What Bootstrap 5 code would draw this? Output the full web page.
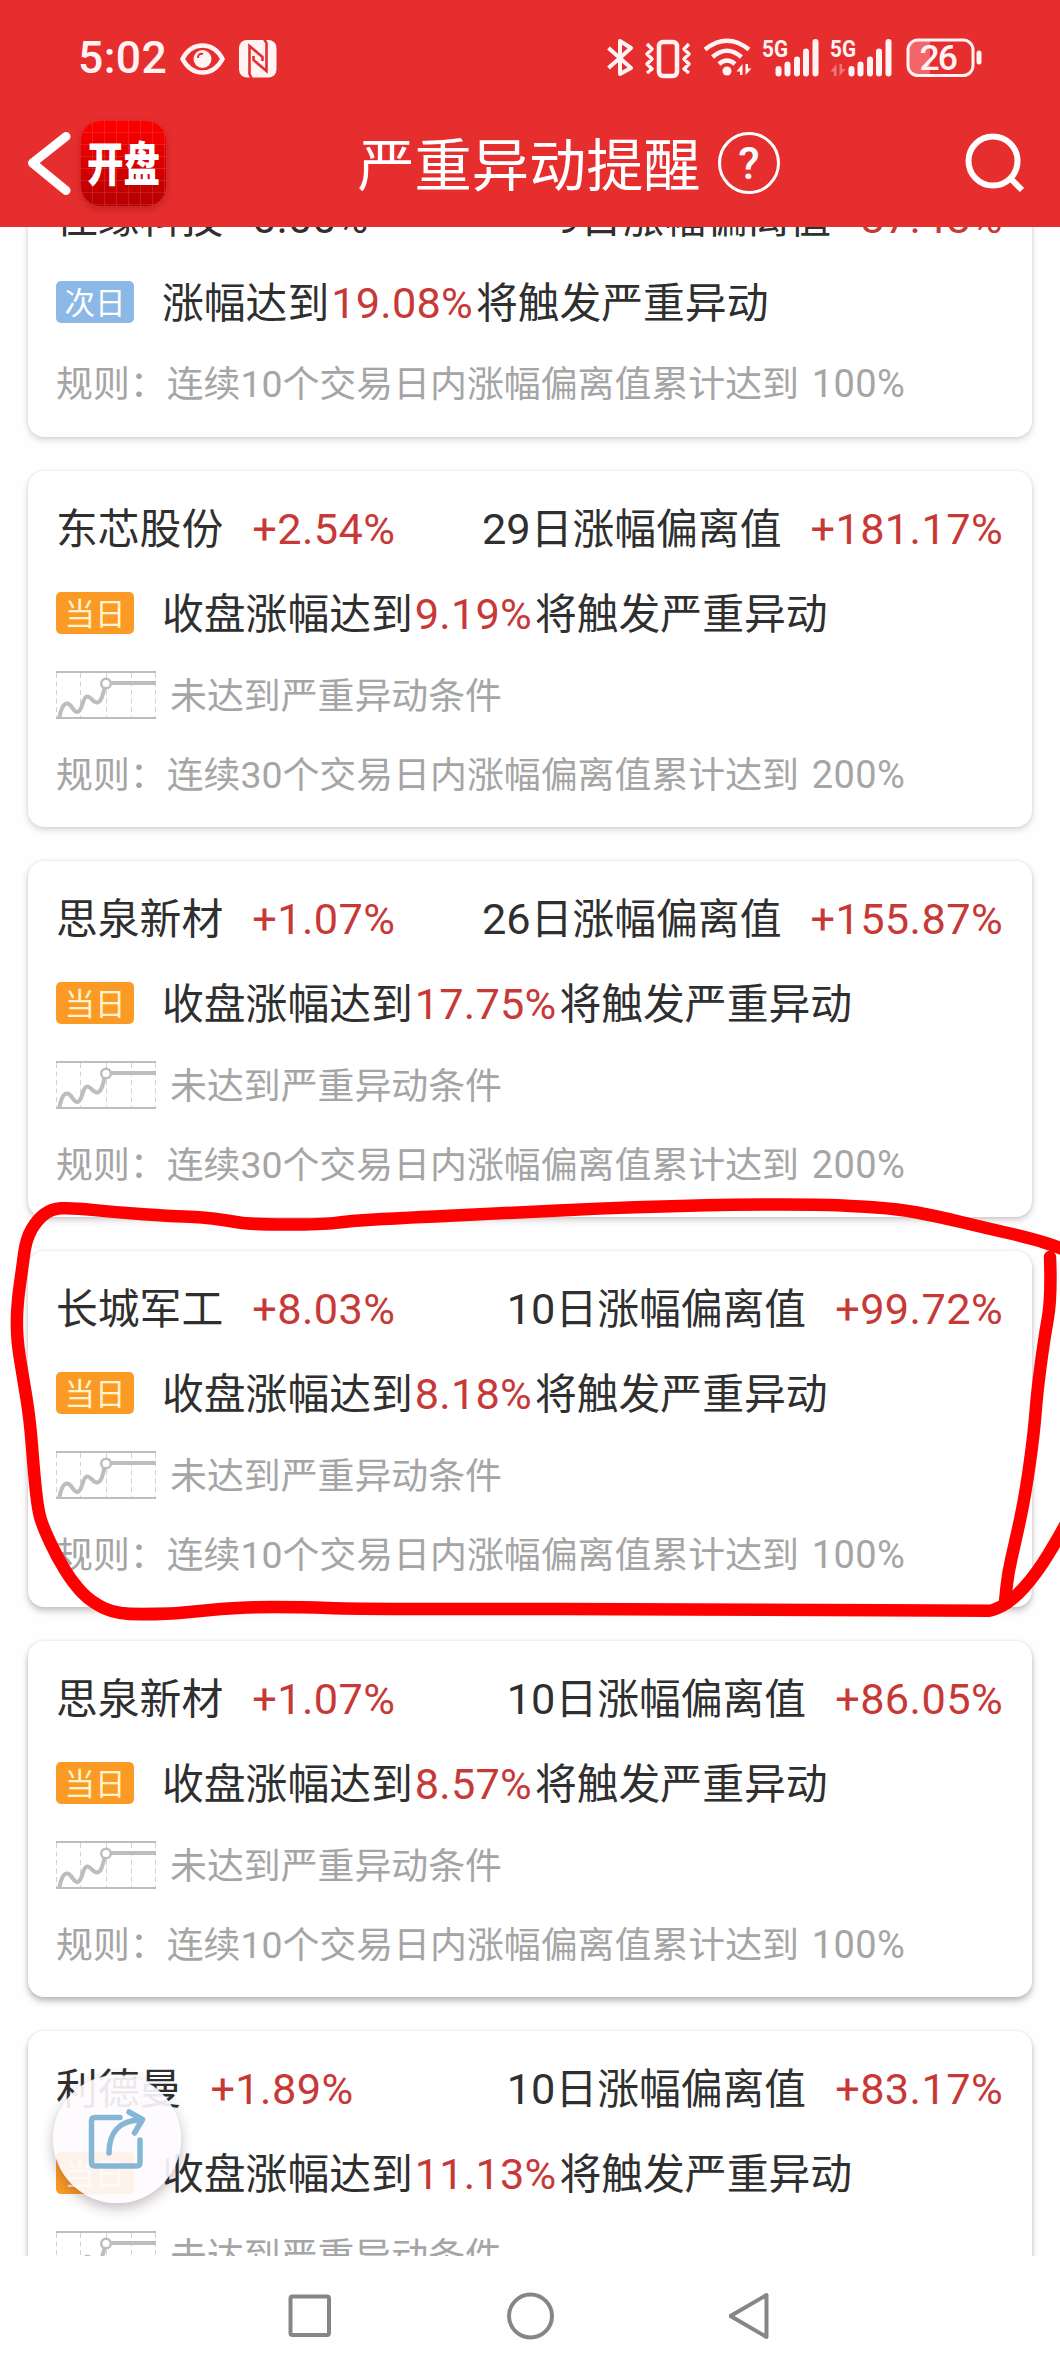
<!DOCTYPE html>
<html lang="zh-CN">
<head>
<meta charset="utf-8">
<meta name="viewport" content="width=device-width, initial-scale=1">
<title>严重异动提醒</title>
<link href="https://cdn.jsdelivr.net/npm/bootstrap@5.3.0/dist/css/bootstrap.min.css" rel="stylesheet">
<style>
body{width:1060px;height:2376px;overflow:hidden;background:#fefefe;color:#2f2f2f;font-family:"Noto Sans CJK SC",sans-serif;font-size:41.8px;line-height:60px}
.app{width:1060px;height:2376px;overflow:hidden}
.top{height:227px;background:#e72e2f;color:#fff;z-index:3;position:relative}
.status{height:116px;padding:0 77px 0 78px}
.clock{font:500 44.5px/60px Roboto,sans-serif;letter-spacing:.4px;width:102px;color:#fff3f4}
.titlebar{height:94px;padding:0 34px 0 27px}
.logo{width:85px;height:85px;border-radius:20px;margin-left:10px;box-shadow:0 3px 9px rgba(120,0,0,.35);overflow:hidden;
background:repeating-linear-gradient(90deg,transparent 0 11px,rgba(255,255,255,.11) 11px 12px),repeating-linear-gradient(transparent 0 11px,rgba(255,255,255,.11) 11px 12px),linear-gradient(#ff0000,#b40000)}
.logo span{display:block;font-weight:900;font-size:36.5px;line-height:81px;transform:scaleY(1.28);white-space:nowrap}
.ttl{font-size:57.2px;line-height:80px;padding-bottom:4px}
.feed{height:2029px;overflow:hidden;padding:0 28px}
.stock{background:#fff;border:0;border-radius:16px;height:356px;margin-bottom:34px;padding:26px 29px 0 28px;box-shadow:0 var(--y,3px) 6px rgba(70,45,60,var(--a,.18)),0 0 3px rgba(70,45,60,.12);flex:none}
.stock.first{height:277px;margin-top:-67px}
.nm{height:62px;white-space:nowrap}
.num{font-family:Roboto,sans-serif;font-size:43.3px}
.rise{color:#c73936}
.nm .rise{letter-spacing:.4px}
.gapv{gap:29px}
.msg{height:104px;padding-top:0;margin-top:2px}
.chip{width:78px;height:42px;border-radius:5px;background:#fb9a24;color:#fff4cf;font-size:30.5px;line-height:41px;text-align:center;margin-right:28px;flex:none}
.chip.blue{background:#8bb8e6;color:#fff}
.pc{margin:0 3px 0 2px;letter-spacing:.2px}
.sub{font-size:36.9px;color:#a5a5a5;height:60px;white-space:nowrap}
.lift{margin-top:-4px}
.sub .num{font-size:37.4px}
.sub .goal{margin-left:3px;font-size:38px;letter-spacing:.4px}
.rule{margin-top:17px}
.first .rule{margin-top:-3px}
.chart{margin-right:14px;flex:none}
.share{position:absolute;left:53px;top:2075px;width:128px;height:128px;border-radius:50%;background:rgba(254,251,254,.91);box-shadow:0 5px 13px rgba(70,45,60,.32);z-index:4}
.pen{position:absolute;left:0;top:1180px;pointer-events:none;z-index:2}
.sys{height:120px;background:#fefefe;padding-left:288px;gap:174.500px}
svg{display:block;flex:none}
</style>
<script src="https://cdn.jsdelivr.net/npm/bootstrap@5.3.0/dist/js/bootstrap.bundle.min.js"></script>
</head>
<body>
<svg width="0" height="0" class="position-absolute">
<symbol id="trend" viewBox="0 0 100 48">
<g fill="none" stroke="#bdbdbd"><path d="M0 1H100M0 47H100" stroke-width="2"/><path d="M.5 2V46M24.500 2V46M50.500 2V46M75.500 2V46M99.500 2V46" stroke="#d2d2d2" stroke-dasharray="5 3.500"/>
<path d="M3.500 46C5 38 7.500 32 11.500 32.500C16 33 17 41.500 21.500 41C27 40 26 26 31 25.500C35 25 37 32.500 41.500 31.500C46 30.500 47 22 48.500 17" stroke-width="4"/><path d="M54 12H100" stroke-width="4"/><circle cx="50" cy="12.500" r="4.800" stroke-width="2.500" fill="#fff"/></g>
</symbol>
</svg>
<div class="app d-flex flex-column position-relative">
<header class="top">
  <div class="status d-flex align-items-center">
    <span class="clock">5:02</span>
    <svg width="97" height="40" viewBox="180 38 97 40"><path d="M182.500 59C192 41 213 41 222.500 59C213 77 192 77 182.500 59Z" fill="none" stroke="#fff3f4" stroke-width="4.500"/><circle cx="202.500" cy="59" r="9" fill="#fff3f4"/><path d="M198 58Q198 53 203 54" fill="none" stroke="#e72e2f" stroke-width="2"/>
    <rect x="239" y="40" width="37.500" height="37.500" rx="8" fill="#fff3f4"/><path d="M251.500 78L249.500 74V46L262.500 57V61M264 39L266.500 43V71L253.500 60V56" fill="none" stroke="#e72e2f" stroke-width="2.600"/></svg>
    <svg class="ms-auto" width="376" height="44" viewBox="608 36 376 44" fill="none" stroke="#fff3f4">
      <path d="M609.500 48L632 68L621 74V41L632 48L609.500 68" stroke-width="4" stroke-linejoin="round"/>
      <rect x="660" y="42" width="18" height="34" rx="4" stroke-width="4.500"/><path d="M648 44L653 49L648 54L653 59L648 64L653 69L648 73M690 44L685 49L690 54L685 59L690 64L685 69L690 73" stroke-width="3.500" stroke-linejoin="round"/>
      <path d="M706 49.500Q728 32 750 49.500M713.500 57Q728 44.500 742.500 57M720 64Q728 57 736 64" stroke-width="4.500"/><circle cx="728" cy="71" r="4.500" fill="#fff3f4" stroke="none"/>
      <path d="M743.500 75V64L737.500 71.500H741V75ZM746.500 64V75L752.500 68.500H749V64Z" fill="#fff3f4" stroke="none"/>
      <g stroke-width="6" stroke-linecap="round"><path d="M779.500 69V73.500M788.500 64.500V73.500M798 59.500V73.500M807 51.500V73.500M816.500 42V73.500M852.500 69V73.500M861.500 64.500V73.500M871 59.500V73.500M880 51.500V73.500M889.500 42V73.500"/></g>
      <path d="M837.500 76V64L831.500 71.500H835V76ZM840.500 64V76L846.500 69H843V64Z" fill="#f47577" stroke="none"/>
      <g fill="#fff3f4" stroke="none" font-family="Roboto" font-weight="700"><text x="763" y="57" font-size="24.500" textLength="26" lengthAdjust="spacingAndGlyphs">5G</text><text x="831" y="57" font-size="24.500" textLength="26" lengthAdjust="spacingAndGlyphs">5G</text></g>
      <path d="M931 41V75H918Q910 75 910 66V50Q910 41 918 41Z" fill="#f26668" stroke="none"/><rect x="909" y="40" width="65" height="35.500" rx="10" stroke-width="3"/><path d="M980 53V62" stroke-width="5" stroke-linecap="round"/>
      <text x="920.500" y="70" font-family="Roboto" font-weight="500" font-size="35.500" textLength="38.500" fill="#fff3f4" stroke="none">26</text>
    </svg>
  </div>
  <div class="titlebar d-flex align-items-center">
    <svg width="44" height="64" viewBox="27 130 44 64"><path d="M66 135.500L32.500 162L66 189.500" fill="none" stroke="#fff" stroke-width="9" stroke-linecap="round" stroke-linejoin="round"/></svg>
    <div class="logo d-flex justify-content-center"><span>开盘</span></div>
    <div class="d-flex align-items-center mx-auto ps-2">
      <span class="ttl">严重异动提醒</span>
      <svg class="ms-3" width="64" height="64" viewBox="0 0 64 64"><circle cx="32" cy="32" r="29.500" fill="none" stroke="#fff" stroke-width="3"/><text x="32" y="47.500" text-anchor="middle" font-family="Roboto" font-weight="500" font-size="44" fill="#fff">?</text></svg>
    </div>
    <svg width="62" height="64" viewBox="964 130 62 64"><g fill="none" stroke="#fff" stroke-width="6"><circle cx="993" cy="160" r="24.500"/><path d="M1010 177L1022 189"/></g></svg>
  </div>
</header>
<main class="feed d-flex flex-column">
  <article class="card stock first">
    <div class="nm d-flex align-items-center justify-content-between"><div class="d-flex align-items-baseline gapv"><span>佳缘科技</span><span class="num">0.00%</span></div><div class="d-flex align-items-baseline gapv"><span><span class="num">9</span>日涨幅偏离值</span><span class="num rise">87.48%</span></div></div>
    <div class="msg d-flex align-items-center"><span class="chip blue">次日</span><span>涨幅达到<span class="num rise pc">19.08%</span>将触发严重异动</span></div>
    <div class="sub rule">规则：连续<span class="num">10</span>个交易日内涨幅偏离值累计达到<span class="num goal"> 100%</span></div>
  </article>
  <article class="card stock">
    <div class="nm d-flex align-items-center justify-content-between"><div class="d-flex align-items-baseline gapv"><span>东芯股份</span><span class="num rise">+2.54%</span></div><div class="d-flex align-items-baseline gapv"><span><span class="num">29</span>日涨幅偏离值</span><span class="num rise">+181.17%</span></div></div>
    <div class="msg d-flex align-items-center"><span class="chip">当日</span><span>收盘涨幅达到<span class="num rise pc">9.19%</span>将触发严重异动</span></div>
    <div class="sub d-flex align-items-center"><svg class="chart" width="100" height="48"><use href="#trend"/></svg><span class="lift">未达到严重异动条件</span></div>
    <div class="sub rule">规则：连续<span class="num">30</span>个交易日内涨幅偏离值累计达到<span class="num goal"> 200%</span></div>
  </article>
  <article class="card stock" style="--a:.24">
    <div class="nm d-flex align-items-center justify-content-between"><div class="d-flex align-items-baseline gapv"><span>思泉新材</span><span class="num rise">+1.07%</span></div><div class="d-flex align-items-baseline gapv"><span><span class="num">26</span>日涨幅偏离值</span><span class="num rise">+155.87%</span></div></div>
    <div class="msg d-flex align-items-center"><span class="chip">当日</span><span>收盘涨幅达到<span class="num rise pc">17.75%</span>将触发严重异动</span></div>
    <div class="sub d-flex align-items-center"><svg class="chart" width="100" height="48"><use href="#trend"/></svg><span class="lift">未达到严重异动条件</span></div>
    <div class="sub rule">规则：连续<span class="num">30</span>个交易日内涨幅偏离值累计达到<span class="num goal"> 200%</span></div>
  </article>
  <article class="card stock" style="--a:.28;--y:4px">
    <div class="nm d-flex align-items-center justify-content-between"><div class="d-flex align-items-baseline gapv"><span>长城军工</span><span class="num rise">+8.03%</span></div><div class="d-flex align-items-baseline gapv"><span><span class="num">10</span>日涨幅偏离值</span><span class="num rise">+99.72%</span></div></div>
    <div class="msg d-flex align-items-center"><span class="chip">当日</span><span>收盘涨幅达到<span class="num rise pc">8.18%</span>将触发严重异动</span></div>
    <div class="sub d-flex align-items-center"><svg class="chart" width="100" height="48"><use href="#trend"/></svg><span class="lift">未达到严重异动条件</span></div>
    <div class="sub rule">规则：连续<span class="num">10</span>个交易日内涨幅偏离值累计达到<span class="num goal"> 100%</span></div>
  </article>
  <article class="card stock" style="--a:.33;--y:4px">
    <div class="nm d-flex align-items-center justify-content-between"><div class="d-flex align-items-baseline gapv"><span>思泉新材</span><span class="num rise">+1.07%</span></div><div class="d-flex align-items-baseline gapv"><span><span class="num">10</span>日涨幅偏离值</span><span class="num rise">+86.05%</span></div></div>
    <div class="msg d-flex align-items-center"><span class="chip">当日</span><span>收盘涨幅达到<span class="num rise pc">8.57%</span>将触发严重异动</span></div>
    <div class="sub d-flex align-items-center"><svg class="chart" width="100" height="48"><use href="#trend"/></svg><span class="lift">未达到严重异动条件</span></div>
    <div class="sub rule">规则：连续<span class="num">10</span>个交易日内涨幅偏离值累计达到<span class="num goal"> 100%</span></div>
  </article>
  <article class="card stock" style="--a:.3;--y:4px">
    <div class="nm d-flex align-items-center justify-content-between"><div class="d-flex align-items-baseline gapv"><span>利德曼</span><span class="num rise">+1.89%</span></div><div class="d-flex align-items-baseline gapv"><span><span class="num">10</span>日涨幅偏离值</span><span class="num rise">+83.17%</span></div></div>
    <div class="msg d-flex align-items-center"><span class="chip">当日</span><span>收盘涨幅达到<span class="num rise pc">11.13%</span>将触发严重异动</span></div>
    <div class="sub d-flex align-items-center"><svg class="chart" width="100" height="48"><use href="#trend"/></svg><span class="lift">未达到严重异动条件</span></div>
  </article>
</main>
<footer class="sys d-flex align-items-center">
  <svg width="44" height="48" viewBox="0 0 44 48"><rect x="2.500" y="4.500" width="38.500" height="38.500" rx="2" fill="none" stroke="#868686" stroke-width="4"/></svg>
  <svg width="48" height="48" viewBox="0 0 48 48"><circle cx="23.500" cy="24" r="21.500" fill="none" stroke="#868686" stroke-width="4"/></svg>
  <svg width="42" height="48" viewBox="0 0 42 48"><path d="M37.500 3V45L1.500 24Z" fill="none" stroke="#868686" stroke-width="4" stroke-linejoin="round"/></svg>
</footer>
<svg class="pen" width="1060" height="460" viewBox="0 1180 1060 460"><g fill="none" stroke="#ff0000" stroke-width="12.500" stroke-linecap="round" stroke-linejoin="round">
<path data-pts="1070,1252 1060,1247.6 1030,1238 986,1228 936,1216 898,1209 854,1206 821,1204.5 740,1204.5 672,1206 598,1208.500 530,1212 400,1218 350,1221 321,1224.7 250,1224.5 225,1220 200,1217 169,1216 118,1212.500 71,1207.7 51,1209 37,1220 26,1239 22,1270 18,1297 16.500,1323 18,1347 23,1377 30,1420 34,1473 38,1510 43,1527 57,1557 73,1583 91,1602 118,1614.7 169,1614 199,1611 243,1607 304,1607 352,1609 530,1609 598,1609 780,1610 986,1610.500 992,1611 1012,1601 1037,1573 1060,1535 1072,1512"/>
<path data-pts="1050,1257 1051.6,1297 1044,1340 1037,1393 1034,1433 1025,1497 1015,1543 1008,1573 1005,1602"/>
</g></svg>
<div class="share"><svg width="128" height="128" viewBox="53 2075 128 128"><g fill="none" stroke="#84b6d5" stroke-width="5.500" stroke-linecap="round" stroke-linejoin="round"><path d="M120 2117.500H95Q91.500 2117.500 91.500 2121V2162.500Q91.500 2166 95 2166H136.500Q140 2166 140 2162.500V2140"/><path d="M109 2153C109 2133 119 2120 141 2120M129 2112L142.500 2119.500L134.500 2133"/></g></svg></div>
</div>
<script>
// Smooth each pen stroke by running quadratic curves through segment midpoints.
document.querySelectorAll('[data-pts]').forEach(function(el){
  var p=el.dataset.pts.split(' ').map(function(s){return s.split(',').map(Number)});
  var d='M'+p[0];
  for(var i=1;i<p.length-1;i++){d+='Q'+p[i]+' '+(p[i][0]+p[i+1][0])/2+','+(p[i][1]+p[i+1][1])/2}
  el.setAttribute('d',d+'L'+p[p.length-1]);
});
</script>
</body>
</html>
